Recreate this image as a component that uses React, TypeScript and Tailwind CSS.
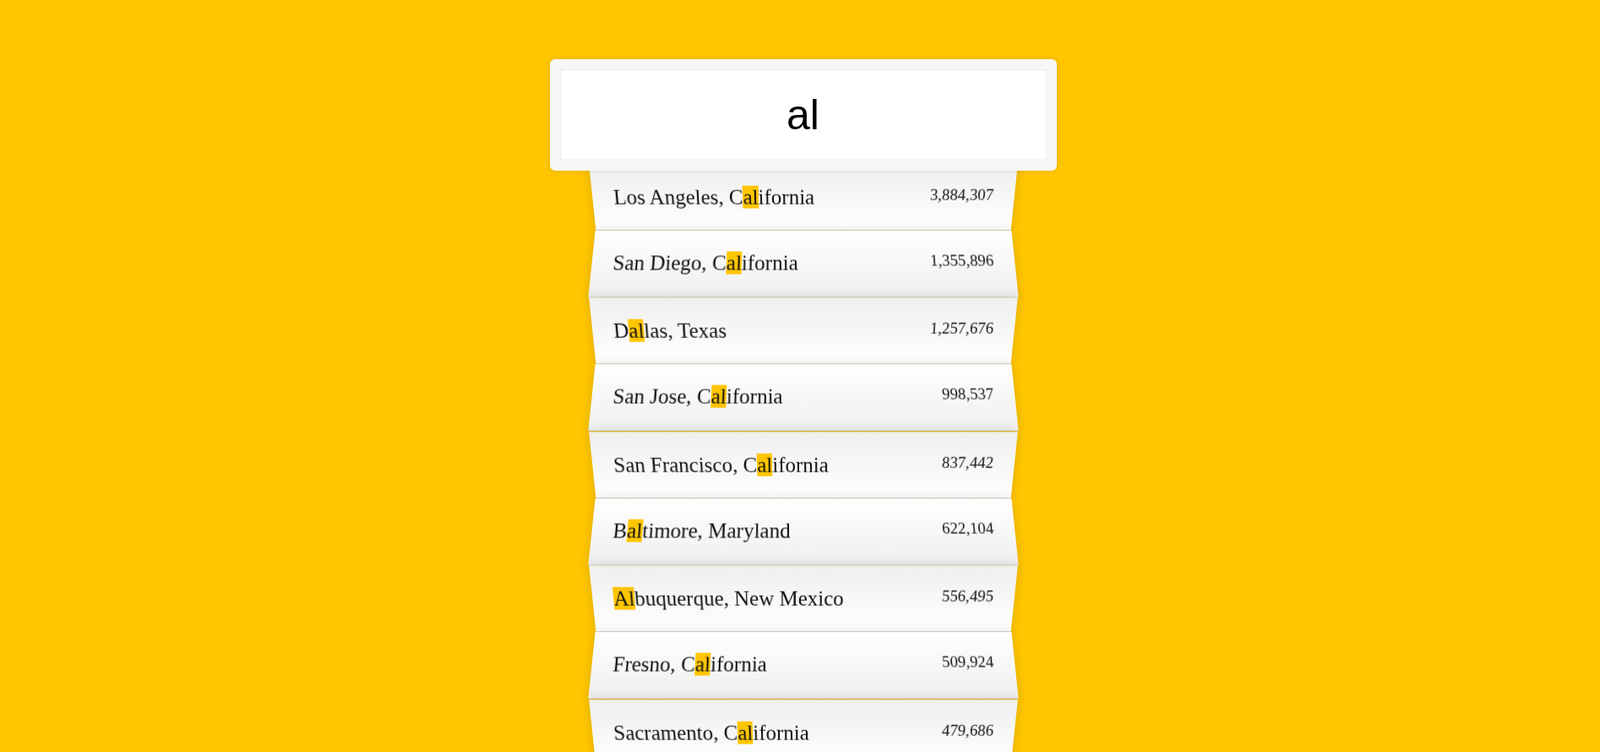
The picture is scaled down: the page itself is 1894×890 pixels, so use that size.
import React from "react";

type Place = { city: string; state: string; population: string };

const places: Place[] = [
  { city: "Los Angeles", state: "California", population: "3884307" },
  { city: "San Diego", state: "California", population: "1355896" },
  { city: "Dallas", state: "Texas", population: "1257676" },
  { city: "San Jose", state: "California", population: "998537" },
  { city: "San Francisco", state: "California", population: "837442" },
  { city: "Baltimore", state: "Maryland", population: "622104" },
  { city: "Albuquerque", state: "New Mexico", population: "556495" },
  { city: "Fresno", state: "California", population: "509924" },
  { city: "Sacramento", state: "California", population: "479686" },
  { city: "Long Beach", state: "California", population: "469428" },
];

const query = "al";

function numberWithCommas(x: string) {
  return x.replace(/\B(?=(\d{3})+(?!\d))/g, ",");
}

// wraps every match in a highlight span, like the vanilla version does
function Highlight({ text }: { text: string }) {
  const parts = text.split(new RegExp(`(${query})`, "gi"));
  return (
    <>
      {parts.map((part, i) =>
        part.toLowerCase() === query ? (
          <span key={i} className="bg-[#ffc600]">
            {query}
          </span>
        ) : (
          <React.Fragment key={i}>{part}</React.Fragment>
        )
      )}
    </>
  );
}

export default function App() {
  return (
    <div className="h-screen overflow-hidden bg-[#ffc600] pl-[7px] font-['Liberation_Serif',serif] text-[25px] leading-[normal] text-[#111]">
      <form className="mx-auto mt-[57.5px] w-[500px]">
        <input
          readOnly
          value={query}
          className="relative top-[12.5px] left-[-50px] z-[2] m-0 box-border w-[600px] rounded-[6.25px] border-[12.5px] border-solid border-[#f7f7f7] bg-white p-[25px] text-center font-['Liberation_Sans',Arial,sans-serif] text-[50px] leading-[normal] text-black shadow-[0_0_6.25px_rgba(0,0,0,0.12),inset_0_0_2.5px_rgba(0,0,0,0.19)] outline-none"
        />
        <ul className="relative m-0 mt-[1px] p-0">
          {places.map((place, i) => (
            <li
              key={place.city}
              className={
                i % 2 === 0
                  ? "m-0 flex list-none justify-between border-b-[1.25px] border-solid border-[#d8d8d8] bg-[linear-gradient(to_top,#ffffff_0%,#efefef_100%)] px-[25px] py-[25.15px] capitalize shadow-[0_0_12.5px_rgba(0,0,0,0.14)] [transform:perspective(125px)_rotateX(-3deg)_translateY(3.75px)]"
                  : "m-0 flex list-none justify-between border-b-[1.25px] border-solid border-[#d8d8d8] bg-[linear-gradient(to_bottom,#ffffff_0%,#efefef_100%)] px-[25px] py-[25.15px] capitalize shadow-[0_0_12.5px_rgba(0,0,0,0.14)] [transform:perspective(125px)_rotateX(3deg)_translateY(2.5px)_scale(1.001)]"
              }
            >
              <span className="name">
                <Highlight text={place.city} />, <Highlight text={place.state} />
              </span>
              <span className="text-[18.75px]">{numberWithCommas(place.population)}</span>
            </li>
          ))}
        </ul>
      </form>
    </div>
  );
}
